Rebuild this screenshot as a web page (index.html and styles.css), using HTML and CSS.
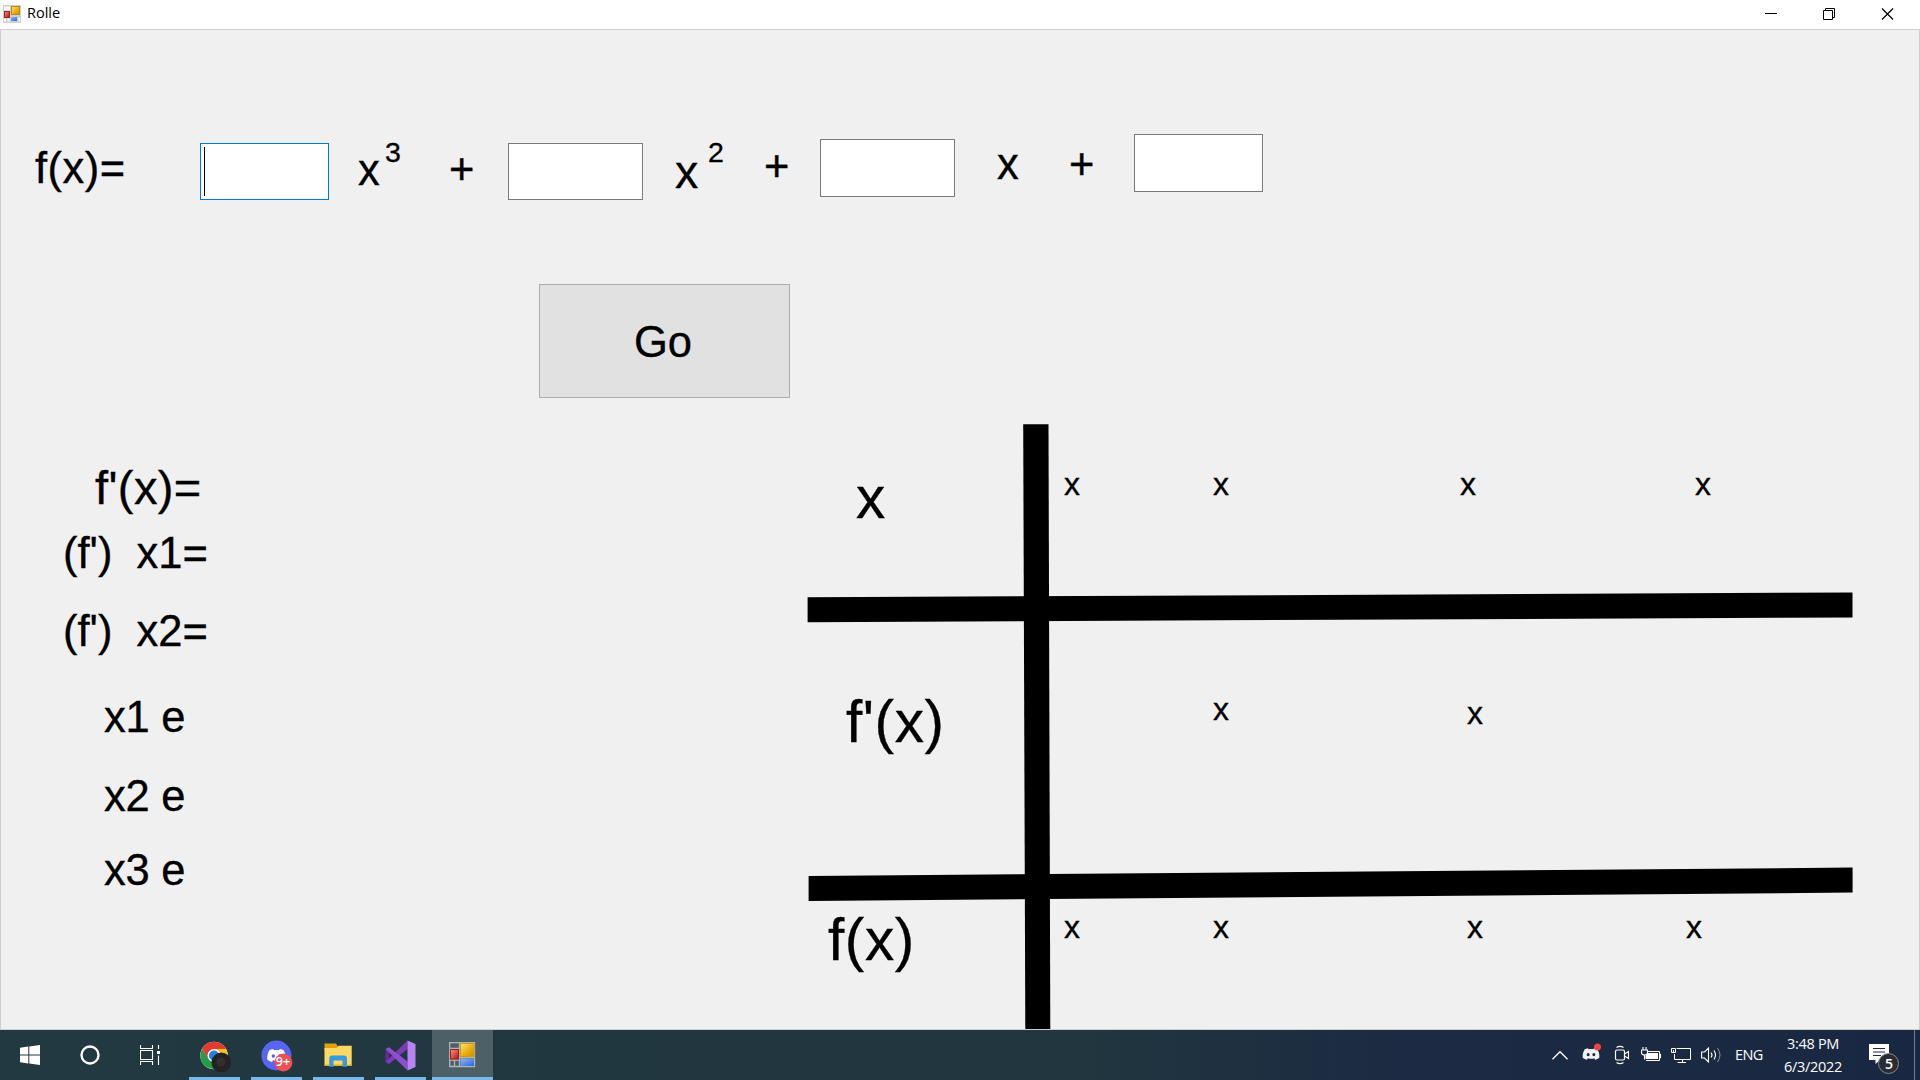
FILE: index.html
```html
<!DOCTYPE html>
<html lang="en">
<head>
<meta charset="utf-8">
<title>Rolle</title>
<link rel="stylesheet" href="styles.css">
</head>
<body>
<svg width="0" height="0" class="defs">
  <defs>
    <linearGradient id="gold" x1="0" y1="0" x2="1" y2="1"><stop offset="0" stop-color="#ffe48a"/><stop offset=".5" stop-color="#eeb414"/><stop offset="1" stop-color="#c98d00"/></linearGradient>
    <linearGradient id="red" x1="0" y1="0" x2="1" y2="1"><stop offset="0" stop-color="#f4998a"/><stop offset="1" stop-color="#b80f0a"/></linearGradient>
    <linearGradient id="blue" x1="0" y1="0" x2="1" y2="1"><stop offset="0" stop-color="#8bb8ff"/><stop offset="1" stop-color="#2b66d4"/></linearGradient>
    <symbol id="discord" viewBox="0 0 24 18"><path d="M8 1.2C6 1.5 4.700 2 3.700 2.500 1.500 5.700.6 9.600.9 13.900c1.600 1.400 3.500 2.300 5.600 2.900l1.300-2.200c2.700.9 5.700.9 8.400 0l1.300 2.200c2.100-.6 4-1.500 5.600-2.900.4-4.800-.7-8.500-2.800-11.400-1-.5-2.300-1-4.300-1.300l-.8 1.500c-2-.3-4.400-.3-6.400 0zM8.200 7.500a2 2.200 0 1 1 0 4.400 2 2.200 0 0 1 0-4.400zm7.600 0a2 2.200 0 1 1 0 4.400 2 2.200 0 0 1 0-4.400z" fill-rule="evenodd"/></symbol>
  </defs>
</svg>
<div class="screen">
  <header class="titlebar">
    <svg class="app-icon" width="18" height="18" viewBox="0 0 18 18"><rect width="18" height="18" fill="#cfcfcf"/><rect x="1" y="1.500" width="6" height="4" fill="#f8f8f8"/><rect x="1" y="13.500" width="2" height="3" fill="#fff"/><rect x="4.500" y="13.500" width="2" height="3" fill="#fff"/><rect x="15.500" y="13" width="1.500" height="3.500" fill="#fff"/><rect x="1.500" y="6.500" width="5" height="6" fill="url(#red)" stroke="#a32020"/><rect x="8.500" y="1.500" width="8" height="8" fill="url(#gold)" stroke="#b88a16"/><rect x="8" y="12" width="6" height="4" fill="url(#blue)"/></svg>
    <span class="title">Rolle</span>
    <div class="window-buttons">
      <svg width="58" height="28" viewBox="0 0 58 28"><path d="M22 13.500h12" stroke="#000"/></svg>
      <svg width="58" height="28" viewBox="0 0 58 28"><path d="M22.500 10.500h9v9h-9zM24.500 10.500v-2h9v9h-2" fill="none" stroke="#000"/></svg>
      <svg width="58" height="28" viewBox="0 0 58 28"><path d="M23 8.500l11 11M34 8.500l-11 11" stroke="#000" stroke-width="1.200"/></svg>
    </div>
  </header>

  <main class="form">
    <div class="formula">
      <span class="label fx">f(x)=</span>
      <div class="box focused"><i class="caret"></i></div>
      <span class="label cubic">x</span>
      <span class="label power">3</span>
      <span class="label plus-a">+</span>
      <div class="box wide"></div>
      <span class="label square">x</span>
      <span class="label power">2</span>
      <span class="label plus-b">+</span>
      <div class="box linear"></div>
      <span class="label linear-x">x</span>
      <span class="label plus-c">+</span>
      <div class="box constant"></div>
    </div>

    <button class="go">Go</button>

    <div class="lower">
      <div class="results">
        <span class="label derivative">f'(x)=</span>
        <span class="label root1">(f')&nbsp; x1=</span>
        <span class="label root2">(f')&nbsp; x2=</span>
        <span class="label interval1">x1 e</span>
        <span class="label interval2">x2 e</span>
        <span class="label interval3">x3 e</span>
      </div>
      <div class="sign-table">
        <svg class="rules" width="1046" height="605" viewBox="807 424 1046 605"><path d="M1023.200 424.300L1048.500 424.300L1050.300 1029L1025.300 1029Z"/><path d="M807.600 597.300L1852.500 592.500L1852.500 617.400L807.600 622.200Z"/><path d="M808.600 876L1852.600 867.600L1852.600 892.600L808.600 901Z"/></svg>
        <span class="head head-x">x</span><span class="mark top first">x</span><span class="mark top second">x</span><span class="mark top third">x</span><span class="mark top fourth">x</span>
        <span class="head head-d">f'(x)</span><span></span><span class="mark mid second">x</span><span class="mark mid-low">x</span><span></span>
        <span class="head head-f">f(x)</span><span class="mark low first">x</span><span class="mark low second">x</span><span class="mark low third-low">x</span><span class="mark low fourth-low">x</span>
      </div>
    </div>
  </main>

  <footer class="taskbar">
    <div class="task start"><svg width="20" height="20" viewBox="0 0 20 20"><path d="M0 2.700L8.300 1.600V9.400H0ZM9.300 1.500L20 0V9.400H9.300ZM0 10.400H8.300V18.400L0 17.300ZM9.300 10.400H20V20L9.300 18.500Z" fill="#fff"/></svg></div>
    <div class="task cortana"><svg width="20" height="20" viewBox="0 0 20 20"><circle cx="10" cy="10" r="8.500" fill="none" stroke="#fff" stroke-width="2.400"/></svg></div>
    <div class="task view"><svg width="20" height="20" viewBox="0 0 20 20"><path d="M.5 0V3.500H12.500V0M.5 5.500H12.500V14.500H.5ZM.5 20V16.500H12.500V20M18.500 0V4M18.500 10.500V20" fill="none" stroke="#fff" stroke-width="1.100"/><rect x="17" y="6" width="3" height="3" fill="#fff"/></svg></div>
    <div class="task open"><svg width="32" height="32" viewBox="0 0 32 32"><circle cx="15" cy="15.500" r="13.700" fill="#fff"/><path d="M15 15.500L3.100 8.700A13.700 13.700 0 0 1 26.900 8.700Z" fill="#e33b2e"/><path d="M3.100 8.700A13.700 13.700 0 0 0 15 29.200L20.500 19.500 15 15.500 9 18Z" fill="#269b48"/><path d="M15 8.700H26.900A13.700 13.700 0 0 1 15 29.200L20.800 18.500Z" fill="#fbc116"/><path d="M3.100 8.700L9.100 18.700 11 10 15 9H26.900V8.700L15 1.800Z" fill="#e33b2e"/><circle cx="15" cy="15.500" r="6.500" fill="#fff"/><circle cx="15" cy="15.500" r="5.100" fill="#2a7de9"/><circle cx="22.300" cy="22.500" r="9.900" fill="#232323"/><circle cx="22" cy="22" r="4.500" fill="#303030"/></svg></div>
    <div class="task open"><svg width="32" height="32" viewBox="0 0 32 32"><circle cx="15.400" cy="15.500" r="15" fill="#5865f2"/><use href="#discord" x="5.500" y="8" width="20" height="15" fill="#fff"/><circle cx="22.400" cy="22.500" r="9" fill="#ed5055"/></svg><span class="badge">9+</span></div>
    <div class="task open"><svg width="32" height="32" viewBox="0 0 32 32"><path d="M1.500 3.500H13l2 3.500-2 3H1.500Z" fill="#e0a106"/><path d="M1.500 8H13.500L15.500 5.800H28.700V25.500H1.500Z" fill="#ffd763"/><path d="M1.500 24.500H28.700V26H1.500Z" fill="#e5ad29"/><path d="M6.300 26.700V18.500q0-3 3-3H21q3 0 3 3V26.700H19.500V20.500H10.500V26.700Z" fill="#349be0"/></svg></div>
    <div class="task open"><svg width="32" height="32" viewBox="0 0 32 32"><path d="M.5 9L4 7.200V20.500L.5 22Z" fill="#642a9e"/><path d="M22.500.5V9L4 24 .5 22Z" fill="#7a3bb8"/><path d="M.5 9L4 7.200 22.500 21.500V30.500Z" fill="#8c50cb"/><path d="M22.500.5L30.500 4V27L22.500 30.500Z" fill="#b983f5"/></svg></div>
    <div class="task active"><svg width="27" height="26" viewBox="0 0 27 26"><path d="M.7.7H25.500V24.500H.7ZM10.500.7V24.500M.7 6.500H10.500M.7 18H10.500M5.500 18V24.500M10.500 15.500H25.500" fill="none" stroke="#aeb5b8" stroke-width="1.300"/><rect x="1.500" y="7.500" width="8" height="9.500" fill="url(#red)" stroke="#a31a14"/><rect x="11.500" y="1.500" width="13.500" height="13" fill="url(#gold)" stroke="#d39b08"/><rect x="11.500" y="16.500" width="13.500" height="7.500" fill="url(#blue)"/></svg></div>

    <div class="tray">
      <svg width="16" height="10" viewBox="0 0 16 10"><path d="M.5 9.200L8 1.700 15.500 9.200" fill="none" stroke="#fff" stroke-width="1.300"/></svg>
      <svg class="t-discord" width="22" height="20" viewBox="0 0 22 20"><use href="#discord" x="1" y="4" width="18" height="14" fill="#f2f2f2"/><circle cx="16.500" cy="4" r="3.500" fill="#f04343"/></svg>
      <svg class="t-meet" width="16" height="20" viewBox="0 0 16 20"><rect x="1.500" y="5" width="9" height="10" rx="1.500" fill="none" stroke="#fff" stroke-width="1.200"/><path d="M10.500 9L14.500 6.500V13.500L10.500 11M2.500 2.500Q6 .2 9.500 2.500M2.500 17.500Q6 19.800 9.500 17.500" fill="none" stroke="#fff" stroke-width="1.100"/></svg>
      <svg class="t-battery" width="20" height="16" viewBox="0 0 20 16"><path d="M6 4.500H18.500V13.500H5M18.500 7H19.500V11H18.500" fill="none" stroke="#fff"/><path d="M6.500 6H17V12H4.500V9Z" fill="#fff"/><path d="M.5 3H6.500V5.500Q6.500 8 3.500 8T.5 5.500ZM2 3V0M5 3V0M3.500 8V12.500" fill="none" stroke="#fff" stroke-width="1.100"/></svg>
      <svg class="t-network" width="20" height="17" viewBox="0 0 20 17"><path d="M5.500 1.500H19.500V12.500H3.500V7M11.500 12.500V15.500M6.500 15.500H15M.5 1.500H4.500V5.500H.5ZM2.500 3V5" fill="none" stroke="#fff"/></svg>
      <svg class="t-sound" width="21" height="18" viewBox="0 0 21 18"><path d="M.6 6H3.500L7.500 2V16L3.500 12H.6ZM10 6.500Q12 9 10 11.500M13 4.500Q16 9 13 13.500" fill="none" stroke="#fff" stroke-width="1.100"/><path d="M16.500 2Q21.500 9 16.500 16" fill="none" stroke="#8792a3"/></svg>
      <span class="language">ENG</span>
      <div class="clock"><span class="time">3:48 PM</span><span class="date">6/3/2022</span></div>
      <div class="notice"><svg width="32" height="32" viewBox="0 0 32 32"><path d="M1 1H21V17H12L7.500 21V17H1Z" fill="#fff"/><path d="M5 5.500H17M5 9H17M5 12.500H13" stroke="#1b2a42"/><circle cx="20.500" cy="20.500" r="10" fill="#292d33" stroke="#858b93"/></svg><span class="count">5</span></div>
      <i class="peek"></i>
    </div>
  </footer>
</div>
</body>
</html>
```
FILE: styles.css
```css
* { box-sizing: border-box; }
body { margin: 0; background: #f0f0f0; color: #000; font-family: "Liberation Sans", Arial, sans-serif; }
.defs { position: absolute; }
.screen { width: 1920px; height: 1080px; overflow: hidden; display: flex; flex-direction: column; }

.titlebar { height: 29px; background: #fff; display: flex; align-items: center; padding: 0 3px; flex: none; }
.app-icon { margin-top: -1px; }
.title { margin: -3px 0 0 6px; font: 14.500px/28px "Open Sans", "Noto Sans", sans-serif; }
.window-buttons { display: flex; margin-left: auto; height: 28px; align-self: flex-start; }

.form { height: 1001px; flex: none; background: #f0f0f0; border: 1px solid #cfcfcf; overflow: hidden; }
.label, .head, .mark, .go { -webkit-text-stroke: .35px #000; }
.label { font-size: 43.500px; line-height: 50px; white-space: pre; }

.formula { display: grid; grid-template-columns: 166px 158px 27px 64px 58px 168px 33px 56px 56px 177px 72px 64px 130px; align-items: start; height: 74px; margin: 98px 0 0 33px; }
.fx { margin: 15px 0 0 1px; letter-spacing: .5px; }
.cubic { margin-top: 17px; }
.power { font-size: 28.500px; margin-top: -1px; }
.plus-a { margin-top: 16px; }
.square { font-size: 46.500px; margin-top: 19px; }
.plus-b { margin-top: 13px; }
.linear-x { margin-top: 11px; }
.plus-c { margin-top: 11px; }
.box { width: 129px; height: 57px; margin-top: 15px; background: #fff; border: 1px solid #7a7a7a; }
.box.focused { border-color: #0078d7; padding: 3px; }
.caret { display: block; width: 1px; height: 49px; background: #000; }
.box.wide { width: 135px; margin-left: 1px; }
.box.linear { width: 135px; height: 58px; margin-top: 11px; }
.box.constant { height: 58px; margin: 6px 0 0 1px; }

.go { display: block; margin: 82px 0 0 538px; width: 251px; height: 114px; padding: 2px 3px 0 0; border: 1px solid #adadad; background: #e1e1e1; font: 43.500px/50px "Liberation Sans", Arial, sans-serif; color: #000; }

.lower { display: flex; margin-top: 26px; }
.results { width: 806px; display: flex; flex-direction: column; }
.derivative { font-size: 47px; margin: 39px 0 0 94px; letter-spacing: .4px; }
.root1, .root2 { margin-left: 62px; }
.root1 { margin-top: 15px; }
.root2 { margin-top: 28px; }
.interval1, .interval2, .interval3 { margin-left: 103px; letter-spacing: -.3px; }
.interval1 { margin-top: 36px; }
.interval2 { margin-top: 29px; }
.interval3 { margin-top: 24px; }

.sign-table { position: relative; width: 1046px; height: 605px; display: grid; grid-template-columns: 256px 149px 248px 235px 158px; grid-template-rows: 173px 274px 158px; align-items: start; }
.rules { position: absolute; left: 0; top: 0; }
.head { font-size: 58.500px; line-height: 66px; letter-spacing: .6px; }
.head-x { margin: 41px 0 0 49px; }
.head-d { margin: 92px 0 0 39px; }
.head-f { margin: 36px 0 0 21px; }
.mark { font-size: 32px; line-height: 36px; }
.first, .second { margin-left: 1px; }
.top { margin-top: 42px; }
.mid { margin-top: 94px; }
.mid-low { margin: 98px 0 0 7px; }
.low { margin-top: 38px; }
.third-low { margin-left: 7px; }
.fourth-low { margin-left: -9px; }

.taskbar { height: 50px; flex: none; display: flex; color: #fff; background: linear-gradient(90deg, #223941 0, #21363f 1080px, #1c2b42 1380px, #1a2742 100%); font-family: "Open Sans", "Noto Sans", sans-serif; }
.task { position: relative; width: 51px; height: 50px; margin-right: 11px; display: flex; justify-content: center; align-items: center; flex: none; }
.task.start { width: 60px; margin: 0; }
.task.cortana { width: 60px; margin: 0; }
.task.view { width: 60px; margin: 0 9px 0 0; }
.task.open { border-bottom: 3px solid #76b9ed; align-items: flex-start; padding-top: 10px; }
.task.active { width: 61px; margin-left: -5px; padding-top: 3px; background: #4d6067; border-bottom: 3px solid #76b9ed; }
.badge { position: absolute; left: 22px; top: 22px; width: 20px; text-align: center; font-size: 12.500px; font-weight: 600; line-height: 20px; }

.tray { margin-left: auto; display: flex; align-items: center; }
.t-discord { margin: -4px 0 0 13px; }
.t-meet { margin-left: 11px; }
.t-battery { margin-left: 11px; }
.t-network { margin-left: 10px; }
.t-sound { margin-left: 10px; }
.language { width: 28px; margin-left: 13px; font-size: 14.500px; letter-spacing: -.6px; line-height: 50px; }
.clock { width: 70px; margin-left: 15px; display: flex; flex-direction: column; align-items: center; font-size: 14.500px; letter-spacing: -.3px; line-height: 23px; white-space: nowrap; }
.notice { position: relative; width: 32px; height: 32px; margin: 8px 0 0 20px; }
.count { position: absolute; left: 11px; top: 11px; width: 20px; text-align: center; font-size: 14px; font-weight: 600; line-height: 20px; }
.peek { width: 6px; height: 50px; margin-left: 14px; border-left: 1px solid #737c8a; }
```
